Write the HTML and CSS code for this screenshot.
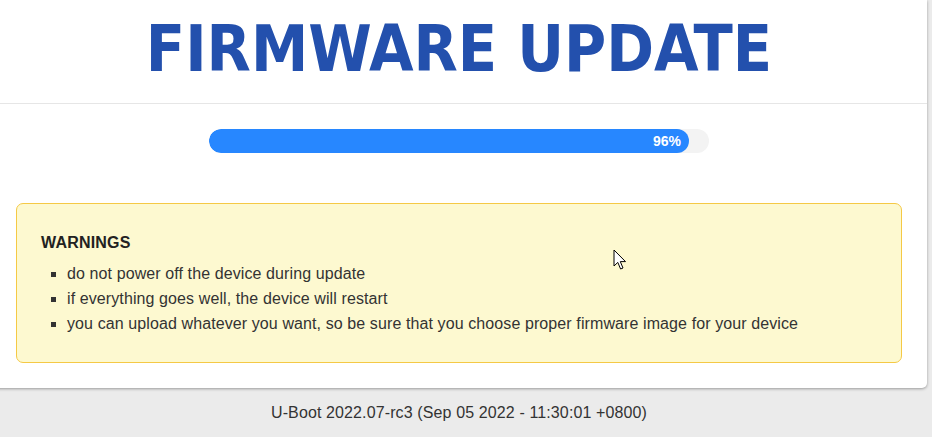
FILE: index.html
```html
<!DOCTYPE html>
<html>
<head>
<meta charset="utf-8">
<link rel="stylesheet" href="styles.css">
</head>
<body>
<div class="page">
  <div class="card">
    <header class="head"><h1 class="title">FIRMWARE UPDATE</h1></header>
    <div class="content">
      <div class="progress"><div class="bar" style="width:96%">96%</div></div>
      <div class="warn">
        <div class="warn-title">WARNINGS</div>
        <ul class="warn-list">
          <li>do not power off the device during update</li>
          <li>if everything goes well, the device will restart</li>
          <li>you can upload whatever you want, so be sure that you choose proper firmware image for your device</li>
        </ul>
      </div>
    </div>
  </div>
  <footer class="foot">U-Boot 2022.07-rc3 (Sep 05 2022 - 11:30:01 +0800)</footer>
</div>
<svg class="cursor" width="14" height="24" viewBox="0 0 14 24"><path d="M1 1 L1 17 L4.8 13.4 L7.6 20 L10 19 L7.3 12.6 L12.5 12.6 Z" fill="#fff" stroke="#000" stroke-width="1" stroke-linejoin="miter"/></svg>
</body>
</html>
```
FILE: styles.css
```css
html, body {
  margin: 0;
  padding: 0;
}
body {
  background: #ebebeb;
  font-family: "Liberation Sans", Arial, sans-serif;
  color: #333;
  overflow: hidden;
  height: 437px;
}
.page {
  width: 936px;
  margin-left: -9px;
}
.card {
  background: #fff;
  border-radius: 0 0 5px 5px;
  box-shadow: 0 1px 3px rgba(0,0,0,0.35);
  padding-bottom: 25px;
}
.head {
  padding-top: 12px;
  padding-bottom: 16px;
  border-bottom: 1px solid #e6e6e6;
}
.title {
  margin: 0;
  text-align: center;
  font-family: "DejaVu Sans Condensed", "DejaVu Sans", sans-serif;
  font-stretch: condensed;
  font-weight: bold;
  font-size: 64px;
  line-height: 75px;
  color: #2350ad;
}
.content {
  padding: 25px 25px 0;
}
.progress {
  width: 500px;
  height: 24px;
  margin: 0 auto;
  background: #f3f3f3;
  border-radius: 12px;
  overflow: hidden;
}
.bar {
  height: 24px;
  background: #2787ff;
  border-radius: 12px;
  color: #fff;
  font-weight: bold;
  font-size: 14px;
  line-height: 24px;
  text-align: right;
  padding-right: 8px;
  box-sizing: border-box;
}
.warn {
  margin-top: 50px;
  background: #fdf9d0;
  border: 1px solid #f5c945;
  border-radius: 7px;
  padding: 26px 24px 26px;
}
.warn-title {
  font-weight: bold;
  font-size: 16px;
  line-height: 25px;
  letter-spacing: 0.2px;
  color: #222;
}
.warn-list {
  margin: 6px 0 0;
  padding-left: 26px;
  list-style: square;
  font-size: 16px;
  line-height: 25px;
  letter-spacing: 0.1px;
  color: #333;
}
.foot {
  text-align: center;
  font-size: 16px;
  line-height: 25px;
  letter-spacing: 0.12px;
  padding-top: 12px;
  color: #333;
}
.cursor {
  position: absolute;
  left: 613px;
  top: 249px;
}
```
